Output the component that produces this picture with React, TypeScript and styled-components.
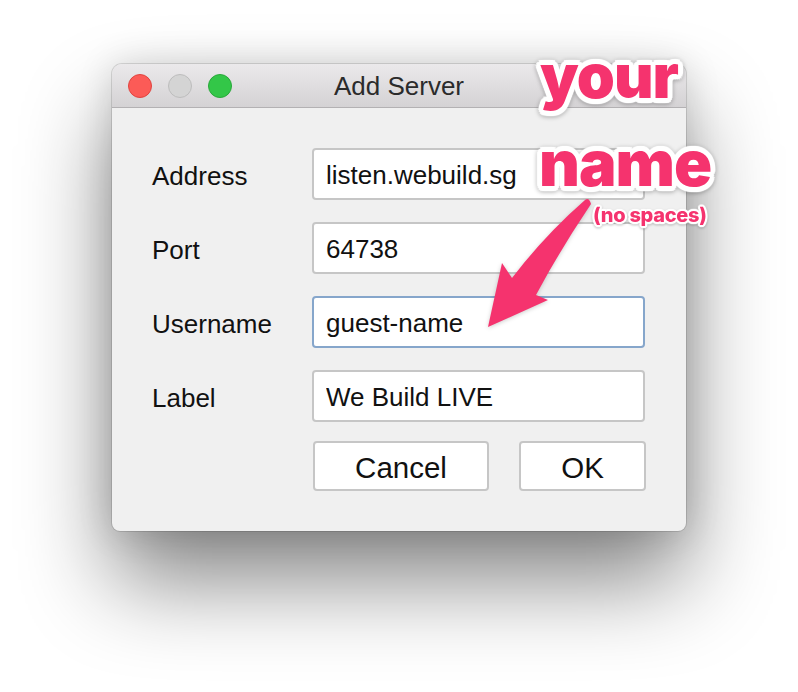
import { FC } from 'react'
import styled, { createGlobalStyle } from 'styled-components'

const GlobalStyle = createGlobalStyle`
  html, body {
    margin: 0;
    padding: 0;
    background: #ffffff;
  }
  body {
    font-family: 'Liberation Sans', Arial, sans-serif;
  }
`

const PINK = '#f5336e'

const fields = [
  { label: 'Address', value: 'listen.webuild.sg' },
  { label: 'Port', value: '64738' },
  { label: 'Username', value: 'guest-name', focused: true },
  { label: 'Label', value: 'We Build LIVE' },
]

const App: FC = () => {
  return (
    <Page>
      <GlobalStyle />
      <Window>
        <TitleBar>
          <Lights>
            <Light $fill="#fc5b57" $edge="#e0443f" />
            <Light $fill="#d4d4d4" $edge="#bdbdbd" />
            <Light $fill="#33c748" $edge="#29a83a" />
          </Lights>
          <Title>Add Server</Title>
        </TitleBar>
        <Body>
          {fields.map((f) => (
            <Row key={f.label}>
              <FieldLabel>{f.label}</FieldLabel>
              <Field readOnly value={f.value} $focused={!!f.focused} />
            </Row>
          ))}
          <ButtonRow>
            <Button $width={176}>Cancel</Button>
            <Button $width={127}>OK</Button>
          </ButtonRow>
        </Body>
      </Window>

      <Callout $left={540} $top={46} $size={61}>your</Callout>
      <Callout $left={539} $top={132} $size={63}>name</Callout>
      <Note>(no spaces)</Note>
      <Arrow viewBox="470 190 140 150" width="140" height="150">
        <path
          d="M591 204 Q560 250 536 295 L548 300 L488 327 L502 263 L512 278 Q545 235 585 200 Q589 197 591 204 Z"
          fill={PINK}
        />
      </Arrow>
    </Page>
  )
}

export default App

const Page = styled.div`
  position: relative;
  width: 798px;
  height: 692px;
  box-sizing: border-box;
  padding: 64px 0 0 112px;
  overflow: hidden;
  background: #fff;
`

const Window = styled.div`
  width: 574px;
  border-radius: 10px 10px 8px 8px;
  background: #f0f0f0;
  box-shadow: 0 50px 90px rgba(0, 0, 0, 0.48), 0 0 36px rgba(0, 0, 0, 0.14),
    0 0 0 1px rgba(0, 0, 0, 0.12);
`

const TitleBar = styled.div`
  position: relative;
  height: 43px;
  display: flex;
  align-items: center;
  justify-content: center;
  border-radius: 10px 10px 0 0;
  background: linear-gradient(#ebe9eb, #d4d2d4);
  border-bottom: 1px solid #b3b1b3;
`

const Lights = styled.div`
  position: absolute;
  left: 16px;
  top: 10px;
  display: flex;
  gap: 16px;
`

const Light = styled.span<{ $fill: string; $edge: string }>`
  width: 22px;
  height: 22px;
  border-radius: 50%;
  background: ${(p) => p.$fill};
  border: 1px solid ${(p) => p.$edge};
`

const Title = styled.div`
  font-size: 26px;
  color: #2b2b2b;
  padding-top: 2px;
`

const Body = styled.div`
  display: flex;
  flex-direction: column;
  gap: 22px;
  padding: 40px 41px 40px 40px;
`

const Row = styled.div`
  display: flex;
  align-items: center;
  height: 52px;
`

const FieldLabel = styled.div`
  width: 160px;
  padding-top: 4px;
  font-size: 26px;
  color: #111;
`

const Field = styled.input<{ $focused: boolean }>`
  box-sizing: border-box;
  width: 333px;
  height: 52px;
  padding: 3px 12px 0;
  border: 2px solid ${(p) => (p.$focused ? '#86a6cb' : '#c6c6c6')};
  border-radius: 4px;
  background: #fff;
  font-family: 'Liberation Sans', Arial, sans-serif;
  font-size: 26px;
  color: #111;
  outline: none;
`

const ButtonRow = styled.div`
  display: flex;
  justify-content: space-between;
  width: 333px;
  margin: -3px 0 0 161px;
`

const Button = styled.div<{ $width: number }>`
  box-sizing: border-box;
  width: ${(p) => p.$width}px;
  height: 50px;
  padding-top: 3px;
  display: flex;
  align-items: center;
  justify-content: center;
  background: #fff;
  border: 2px solid #c6c6c6;
  border-radius: 4px;
  font-size: 29.5px;
  color: #111;
`

const outline = (r: number) => {
  const out: string[] = []
  for (let i = 0; i < 16; i++) {
    const a = (i / 16) * Math.PI * 2
    out.push(`${(Math.cos(a) * r).toFixed(1)}px ${(Math.sin(a) * r).toFixed(1)}px 1px #fff`)
  }
  return out.join(', ')
}

const Callout = styled.div<{ $left: number; $top: number; $size: number }>`
  position: absolute;
  left: ${(p) => p.$left}px;
  top: ${(p) => p.$top}px;
  font-family: Inter, 'Liberation Sans', sans-serif;
  font-weight: 900;
  font-size: ${(p) => p.$size}px;
  line-height: 1;
  letter-spacing: -1px;
  color: ${PINK};
  text-shadow: ${outline(5)};
  filter: drop-shadow(0 1px 2px rgba(0, 0, 0, 0.3));
`

const Note = styled.div`
  position: absolute;
  left: 593px;
  top: 205px;
  font-family: Inter, 'Liberation Sans', sans-serif;
  font-weight: 800;
  font-size: 20px;
  line-height: 1;
  letter-spacing: -0.3px;
  color: ${PINK};
  text-shadow: ${outline(2)};
  filter: drop-shadow(0 1px 1px rgba(0, 0, 0, 0.25));
`

const Arrow = styled.svg`
  position: absolute;
  left: 470px;
  top: 190px;
  filter: drop-shadow(0 1px 2px rgba(0, 0, 0, 0.2));
`
